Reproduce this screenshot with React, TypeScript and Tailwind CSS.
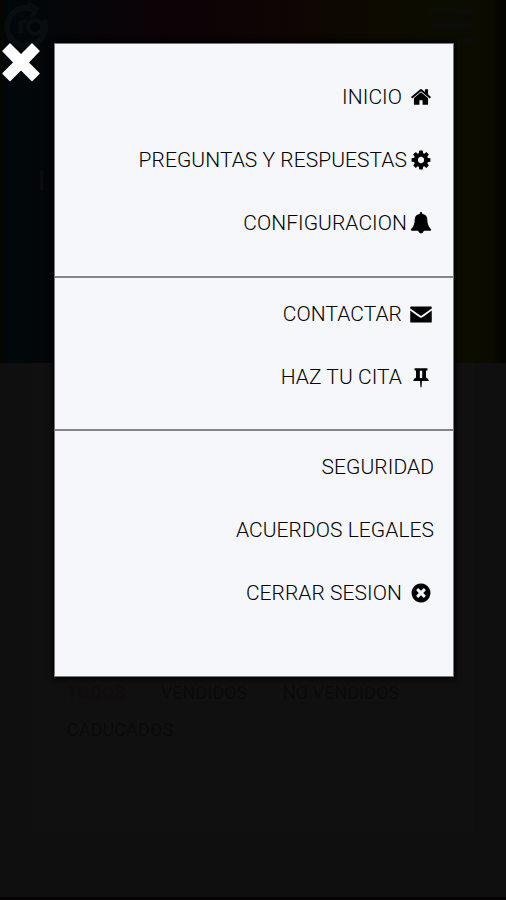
import React from 'react';

type IconName = 'home' | 'cog' | 'bell' | 'envelope' | 'pin' | 'close';

type Item = { label: string; icon?: IconName; tight?: boolean };

const paths: Record<IconName, string> = {
  home: 'M1472 992v480q0 26-19 45t-45 19h-384v-384h-256v384h-384q-26 0-45-19t-19-45v-480q0-1 .5-3t.5-3l575-474 575 474q1 2 1 6zm223-69l-62 74q-8 9-21 11h-3q-13 0-21-7l-692-577-692 577q-12 8-24 7-13-2-21-11l-62-74q-8-10-7-23.5t11-21.5l719-599q32-26 76-26t76 26l244 204v-195q0-14 9-23t23-9h192q14 0 23 9t9 23v408l219 182q10 8 11 21.5t-7 23.5z',
  cog: 'M1152 896q0-106-75-181t-181-75-181 75-75 181 75 181 181 75 181-75 75-181zm512-109v222q0 12-8 23t-20 13l-185 28q-19 54-39 91 35 50 107 138 10 12 10 25t-9 23q-27 37-99 108t-94 71q-12 0-26-9l-138-108q-44 23-91 38-16 136-29 186-7 28-36 28h-222q-14 0-24.5-8.5t-11.5-21.5l-28-184q-49-16-90-37l-141 107q-10 9-25 9-14 0-25-11-126-114-165-168-7-10-7-23 0-12 8-23 15-21 51-66.5t54-70.5q-27-50-41-99l-183-27q-13-2-21-12.5t-8-23.5v-222q0-12 8-23t19-13l186-28q14-46 39-92-40-57-107-138-10-12-10-24 0-10 9-23 26-36 98.5-107.5t94.5-71.5q13 0 26 10l138 107q44-23 91-38 16-136 29-186 7-28 36-28h222q14 0 24.5 8.5t11.5 21.5l28 184q49 16 90 37l142-107q9-9 24-9 13 0 25 10 129 119 165 170 7 8 7 22 0 12-8 23-15 21-51 66.5t-54 70.5q26 50 41 98l183 28q13 2 21 12.5t8 23.5z',
  bell: 'M1728 1408q0 52-38 90t-90 38h-470q-30 190-234 220-204-30-234-220h-470q-52 0-90-38t-38-90q50-42 91-88t85-119.5 74.5-158.5 50-206 19.5-260q0-152 117-282.5t307-158.5q-8-19-8-39 0-40 28-68t68-28 68 28 28 68q0 20-8 39 190 28 307 158.5t117 282.5q0 139 19.5 260t50 206 74.5 158.5 85 119.5 91 88z',
  envelope: 'M20 330q0-50 50-50h1650q50 0 50 50v110l-874 620-874-620zM20 610l600 440 276 170 276-170 600-440v930q0 50-50 50h-1650q-50 0-50-50z',
  pin: 'M370 180h1052v190h-120v560q220 80 230 290h-560l-30 500q-46 60-92 0l-30-500h-560q10-210 230-290v-560h-120zM800 390v580h192v-580z',
  close: 'M1277 1122q0-26-19-45l-181-181 181-181q19-19 19-45 0-27-19-46l-90-90q-19-18-46-18-26 0-45 18l-181 181-181-181q-19-18-45-18-27 0-46 18l-90 90q-19 19-19 46 0 26 19 45l181 181-181 181q-19 19-19 45 0 27 19 46l90 90q19 18 46 18 26 0 45-18l181-181 181 181q19 18 45 18 27 0 46-18l90-90q19-19 19-46zm387-226q0 209-103 385.5t-279.5 279.5-385.5 103-385.5-103-279.5-279.5-103-385.5 103-385.5 279.5-279.5 385.5-103 385.5 103 279.5 279.5 103 385.5z',
};

const sections: Item[][] = [
  [
    { label: 'INICIO', icon: 'home' },
    { label: 'PREGUNTAS Y RESPUESTAS', icon: 'cog', tight: true },
    { label: 'CONFIGURACION', icon: 'bell', tight: true },
  ],
  [
    { label: 'CONTACTAR', icon: 'envelope' },
    { label: 'HAZ TU CITA', icon: 'pin' },
  ],
  [
    { label: 'SEGURIDAD' },
    { label: 'ACUERDOS LEGALES' },
    { label: 'CERRAR SESION', icon: 'close' },
  ],
];

function MenuRow({ item }: { item: Item }) {
  return (
    <a className="flex h-[63.2px] items-center justify-end whitespace-nowrap">
      <span>{item.label}</span>
      {item.icon && (
        <svg viewBox="0 0 1792 1792" className={item.tight ? 'mb-[2px] ml-[3px] mr-[2px] h-[22px] w-[22px]' : 'mb-[2px] ml-[8px] mr-[2px] h-[22px] w-[22px]'} fill="currentColor" fillRule="evenodd">
          <path d={paths[item.icon]} />
        </svg>
      )}
    </a>
  );
}

function Backdrop() {
  return (
    <div className="flex h-full flex-col bg-[#0f0f0f]">
      <div className="flex h-[363px] shrink-0 flex-col border-l-4 border-[#060600] bg-[linear-gradient(90deg,#00070a_0%,#050508_14%,#0d0206_34%,#0e0504_54%,#0d0a00_74%,#0c0d00_86%,#0b0b00_97%,#030300_100%)]">
        <div className="flex h-[52px] w-full items-center justify-between pr-[34px]">
          <svg viewBox="0 0 48 52" className="h-[52px] w-[48px]" fill="none" stroke="#0a0d0f" strokeWidth="6">
            <path d="M29 9A19 19 0 1 0 40 20" />
            <path d="M24 3l9 6-6 8M17 33V21M17 26q0-5 6-5M38 27a7 7 0 1 1-14 0 7 7 0 0 1 14 0" strokeWidth="4" />
          </svg>
          <div className="flex flex-col gap-[9px]">
            <div className="h-[6px] w-[44px] bg-[#0c0c0a]" />
            <div className="h-[6px] w-[44px] bg-[#0c0c0a]" />
            <div className="h-[6px] w-[44px] bg-[#0c0c0a]" />
          </div>
        </div>
        <div className="ml-[36px] mt-[118px] h-[21px] w-[3px] bg-[#090b0d]" />
      </div>
      <div className="mx-[32px] h-[469px] border border-[#111] bg-[#101010] px-[34px] pt-[318px] text-[18px] leading-[22px] tracking-[0.1px] text-[#0a0a0a]">
        <div className="flex gap-[35px] whitespace-nowrap">
          <span className="font-medium text-[#130b0c]">TODOS</span>
          <span>VENDIDOS</span>
          <span>NO VENDIDOS</span>
        </div>
        <div className="mt-[15px]">CADUCADOS</div>
      </div>
      <div className="mt-auto h-[3px] bg-[#050304]" />
    </div>
  );
}

export default function App() {
  return (
    <div className="relative h-[900px] w-[506px] overflow-hidden font-[Roboto,sans-serif]">
      <Backdrop />

      <button type="button" className="absolute left-0 top-[40px] text-white">
        <svg viewBox="0 0 42 44" className="h-[44px] w-[42px]" fill="currentColor">
          <path d="M10 4l11 11 11-11 7 7-11 11.5 11 11-7 7-11-11-11 11-7-7 11-11-11-11.5z" stroke="currentColor" strokeWidth="1.4" strokeLinejoin="round" />
        </svg>
      </button>

      <nav className="absolute left-[54px] top-[43px] h-[634px] w-[400px] border border-[#777] bg-[#f5f7fb] text-[21px] font-light tracking-[0.05px] text-black shadow-[0_0_5px_2px_#000]">
        {sections.map((items, i) => (
          <div key={i} className={i === 0 ? 'h-[232px] pr-[19px] pt-[22px]' : i === 1 ? 'h-[153px] border-t-2 border-[#858585] pr-[19px] pt-[5px]' : 'border-t-2 border-[#858585] pr-[19px] pt-[5px]'}>
            {items.map(item => <MenuRow key={item.label} item={item} />)}
          </div>
        ))}
      </nav>
    </div>
  );
}
